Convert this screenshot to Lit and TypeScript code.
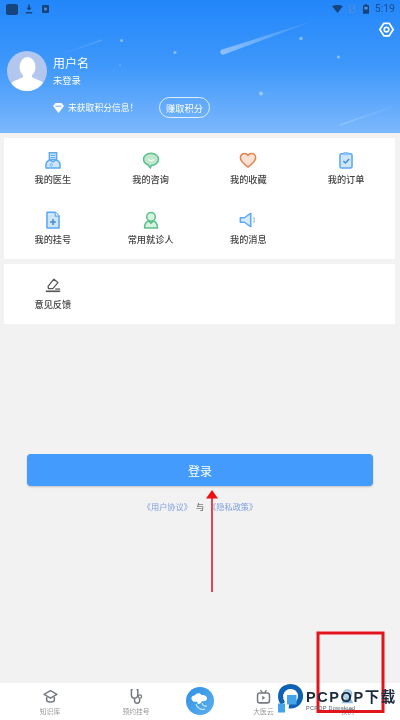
import { LitElement, html, css, svg } from "lit";
import { customElement } from "lit/decorators.js";

const BLUE = "#5aa9f2";
const GREY = "#767b82";
const menuIcons: Record<string, unknown> = {
  doctor: svg`<path d="M6 2h8v7.500H6z" fill="#dcecfb" stroke="${BLUE}" stroke-width="1.700"/><path d="M7.500 4.800h5M7.500 7.200h5" stroke="${BLUE}" stroke-width="1.300"/><path d="M2.200 19v-3.500c0-3 2.600-5 4.800-5.500l3 2 3-2c2.200.5 4.800 2.500 4.800 5.500V19z" fill="#cfe5fa" stroke="${BLUE}" stroke-width="1.700" stroke-linejoin="round"/><circle cx="8" cy="15.500" r="1.300" fill="#fff" stroke="${BLUE}"/>`,
  chat: svg`<path d="M10 2.500c4.700 0 8.300 2.900 8.300 6.700s-3.600 6.800-8.300 6.800l-.5 2.800-3-3.600C3.500 14.100 1.700 12 1.700 9.200 1.700 5.400 5.300 2.500 10 2.500z" fill="#bfe8cf" stroke="#5cc08a" stroke-width="1.700" stroke-linejoin="round"/><path d="M7 9.500c1.800 1.500 4.200 1.500 6 0" fill="none" stroke="#fff" stroke-width="1.500"/>`,
  heart: svg`<path d="M10 17.800C5 14.200 1.500 11 1.500 7.500 1.500 4.500 3.800 2.800 6.200 2.800 7.800 2.800 9.200 3.600 10 4.900 10.800 3.600 12.200 2.800 13.800 2.800 16.200 2.800 18.500 4.500 18.500 7.500c0 3.500-3.500 6.700-8.500 10.300z" fill="#fbe0d4" stroke="#e2844f" stroke-width="1.700" stroke-linejoin="round"/>`,
  order: svg`<rect x="3.300" y="3" width="13.400" height="16" rx="1.800" fill="#cfe5fa" stroke="${BLUE}" stroke-width="1.700"/><rect x="7" y="1" width="6" height="3.800" rx="1" fill="#8cc4f6"/><path d="M7 11l2.400 2.400L13.500 8.800" fill="none" stroke="#3f8fd8" stroke-width="1.600"/>`,
  reg: svg`<path d="M3.300 1.500h9.200l4.200 4.200V19H3.300z" fill="#cfe5fa" stroke="${BLUE}" stroke-width="1.700" stroke-linejoin="round"/><path d="M12.500 1.500v4.200h4.200" fill="#fff" stroke="${BLUE}" stroke-width="1.200"/><path d="M10 9v6.500M6.800 12.200h6.400" stroke="#3f8fd8" stroke-width="1.700"/>`,
  patient: svg`<circle cx="10" cy="6.500" r="4.800" fill="#d8f2e2" stroke="#5cc08a" stroke-width="1.700"/><path d="M7.500 11.200C4.500 12 2.800 14 2.800 18.800h14.400c0-4.800-1.700-6.800-4.700-7.600L10 13.500z" fill="#d8f2e2" stroke="#5cc08a" stroke-width="1.700" stroke-linejoin="round"/>`,
  msg: svg`<path d="M1.500 7.500H6l7-5v15l-7-5H1.500z" fill="#d8ebfb" stroke="${BLUE}" stroke-width="1.700" stroke-linejoin="round"/><path d="M16 6.500c1.200 2 1.200 5 0 7" fill="none" stroke="#a9d3f8" stroke-width="1.600"/>`,
  pen: svg`<path d="M4.500 11.500L11 3.500l4.500 3.800-5.700 6.700H5z" fill="none" stroke="#555" stroke-width="1.400" stroke-linejoin="round"/><path d="M2 17h16" stroke="#555" stroke-width="1.800"/><path d="M12.500 14.500h5.500" stroke="#555" stroke-width="1.400"/>`,
};

const tabIcons: Record<string, unknown> = {
  cap: svg`<path d="M10 3L2.500 7.500 10 12l7.500-4.500z" fill="none" stroke="${GREY}" stroke-width="1.800" stroke-linejoin="round"/><path d="M5.500 10.500v4.500c1.500 2 7.500 2 9 0v-4.500" fill="none" stroke="${GREY}" stroke-width="1.800"/>`,
  steth: svg`<path d="M5.500 2H4v5.500c0 3 2 4.500 3.700 4.500s3.800-1.500 3.800-4.500V2H10" fill="none" stroke="${GREY}" stroke-width="1.800"/><path d="M7.700 12v2.800c0 2 1.400 3.200 3 3.200s3-1.200 3-3.200V12" fill="none" stroke="${GREY}" stroke-width="1.800"/><circle cx="14" cy="10" r="2" fill="none" stroke="${GREY}" stroke-width="1.500"/>`,
  tv: svg`<rect x="3" y="6" width="14" height="11.500" rx="2.500" fill="none" stroke="${GREY}" stroke-width="1.800"/><path d="M6.500 2.500L9 6M13.500 2.500L11 6" stroke="${GREY}" stroke-width="1.600"/><path d="M8.500 9.200l3.500 2.400-3.500 2.400z" fill="${GREY}"/>`,
  me: svg`<circle cx="10" cy="7" r="5" fill="#b9d7ee" stroke="#8dbbdd" stroke-width="1.300"/><path d="M3.500 18c.5-4 3-5.800 6.500-5.800s6 1.800 6.500 5.800z" fill="#8dbbdd"/>`,
};

const menu = [
  ["doctor", "我的医生"],
  ["chat", "我的咨询"],
  ["heart", "我的收藏"],
  ["order", "我的订单"],
  ["reg", "我的挂号"],
  ["patient", "常用就诊人"],
  ["msg", "我的消息"],
];

const tabs = [
  ["cap", "知识库"],
  ["steth", "预约挂号"],
  ["", ""],
  ["tv", "大医云"],
  ["me", "我的"],
];

@customElement("app-root")
export class AppRoot extends LitElement {
  static styles = css`
    :host {
      display: block;
      width: 400px;
      height: 720px;
      overflow: hidden;
      position: relative;
      background: #f2f2f2;
      font-family: "Noto Sans CJK SC", "Liberation Sans", sans-serif;
      filter: blur(0.55px);
    }
    .page { display: flex; flex-direction: column; height: 720px; }
    .hero {
      position: relative;
      height: 133px;
      flex: none;
      box-sizing: border-box;
      background: linear-gradient(180deg, #2286fa 0%, #3f98fb 50%, #7cb8fc 100%);
      color: #fff;
      overflow: hidden;
    }
    .sky { position: absolute; inset: 0; width: 400px; height: 133px; }
    .status {
      position: relative;
      height: 18px;
      display: flex;
      align-items: center;
      padding: 0 5px 0 6px;
      box-sizing: border-box;
    }
    .status svg { display: block; }
    .status .gap { flex: 1; }
    .time { font-family: "Roboto", sans-serif; font-size: 10.500px; color: #1a4f90; margin-left: 6px; line-height: 18px; }
    .gear-row { position: relative; display: flex; justify-content: flex-end; padding: 4px 6px 0 0; height: 19px; box-sizing: border-box; }
    .gear-row svg { width: 15px; height: 15px; display: block; }
    .profile { position: relative; display: flex; align-items: center; gap: 6px; padding: 14px 0 0 7px; }
    .avatar { width: 40px; height: 40px; display: block; flex: none; }
    .name { font-size: 12px; line-height: 16px; }
    .sub { font-size: 9.300px; line-height: 13px; margin-top: 3px; }
    .points { position: relative; display: flex; align-items: center; padding: 6px 0 0 53px; font-size: 8.800px; }
    .points svg { width: 11px; height: 10px; margin-right: 4px; flex: none; display: block; }
    .pill {
      margin-left: 20.600px;
      width: 51px;
      height: 21px;
      box-sizing: border-box;
      border: 1.500px solid rgba(255,255,255,.8);
      border-radius: 11px;
      display: flex;
      align-items: center;
      justify-content: center;
      font-size: 9.200px;
    }
    .card { background: #fff; margin: 5px 5px 0 4px; }
    .grid { display: grid; grid-template-columns: repeat(4, 1fr); height: 121px; grid-auto-rows: 60px; }
    .cell { display: flex; flex-direction: column; align-items: center; padding-top: 13px; box-sizing: border-box; height: 60px; }
    .feedback { padding-top: 12px; }
    .cell svg { width: 18px; height: 18px; display: block; }
    .cell span { font-size: 9.200px; font-weight: 500; line-height: 12px; margin-top: 4px; color: #444; white-space: nowrap; }
    .grid-2 { height: 60px; }
    .login {
      margin: 130px 27px 0;
      height: 32px;
      background: #439cfd;
      border-radius: 4px;
      box-shadow: 0 1px 2px rgba(0,0,0,.2);
      color: #fff;
      font-size: 12px;
      display: flex;
      align-items: center;
      justify-content: center;
    }
    .links { margin-top: 14px; display: flex; justify-content: center; font-size: 8.200px; line-height: 12px; color: #7f9fe0; gap: 4px; }
    .links b { font-weight: 400; color: #444; }
    .spacer { flex: 1; }
    .tabbar {
      flex: none;
      height: 37px;
      background: #fff;
      display: grid;
      grid-template-columns: 100px 72px 56px 71px 97px;
    }
    .tab { display: flex; flex-direction: column; align-items: center; padding-top: 5px; box-sizing: border-box; }
    .tab svg { width: 17px; height: 17px; display: block; }
    .tab span { font-size: 6.800px; line-height: 10px; color: #999; margin-top: 1px; white-space: nowrap; }
    .hub { display: flex; justify-content: center; padding-top: 4px; }
    .hub svg { width: 28px; height: 28px; display: block; }
    .overlay { position: absolute; left: 0; top: 0; width: 400px; height: 720px; pointer-events: none; }
    .mark { position: absolute; left: 306px; top: 690px; color: #1c2b3d; font-weight: 700; font-size: 14.500px; line-height: 15px; letter-spacing: 1.600px; font-family: "Liberation Sans", "Noto Sans CJK SC", sans-serif; white-space: nowrap; }
    .mark-sub { position: absolute; left: 306px; top: 705px; color: #555f6b; font-size: 5.500px; line-height: 7px; font-family: "Liberation Sans", sans-serif; white-space: nowrap; letter-spacing: 0.300px; }
  `;

  private gear() {
    return html`<svg viewBox="1 1 18 18"><path d="M6.800 2.500h6.400l4.800 7.500-4.800 7.500H6.800L2 10z" fill="none" stroke="#fff" stroke-width="2.100" stroke-linejoin="round"/><circle cx="10" cy="10" r="2.800" fill="none" stroke="#fff" stroke-width="1.900"/></svg>`;
  }

  render() {
    return html`
      <div class="page">
        <section class="hero">
          <svg class="sky" viewBox="0 0 400 133">
            <defs>
              <linearGradient id="m1" x1="222" y1="52" x2="322" y2="18" gradientUnits="userSpaceOnUse">
                <stop offset="0" stop-color="#fff" stop-opacity=".42"/><stop offset="1" stop-color="#fff" stop-opacity="0"/>
              </linearGradient>
              <linearGradient id="m2" x1="62" y1="54" x2="102" y2="40" gradientUnits="userSpaceOnUse">
                <stop offset="0" stop-color="#fff" stop-opacity="0"/><stop offset="1" stop-color="#fff" stop-opacity=".16"/>
              </linearGradient>
              <linearGradient id="m3" x1="340" y1="125" x2="392" y2="107" gradientUnits="userSpaceOnUse">
                <stop offset="0" stop-color="#fff" stop-opacity=".2"/><stop offset="1" stop-color="#fff" stop-opacity=".04"/>
              </linearGradient>
            </defs>
            <path d="M222 49.500L322 18 224 54.500a2.600 2.600 0 0 1-2-5z" fill="url(#m1)"/>
            <path d="M62 54L102 40" stroke="url(#m2)" stroke-width="1.500"/>
            <path d="M340 125L392 107" stroke="url(#m3)" stroke-width="1.500"/>
            <g fill="#fff" fill-opacity=".42">
              <circle cx="121.500" cy="40.500" r="1.500"/><circle cx="175" cy="52.500" r="1.500"/>
              <circle cx="301" cy="38.500" r="1.700"/><circle cx="338.500" cy="57" r="1.500"/>
              <circle cx="261" cy="93.500" r="2"/><circle cx="120" cy="65" r="1" fill-opacity=".2"/>
            </g>
          </svg>
          <div class="status">
            <svg width="12" height="11" viewBox="0 0 12 11"><rect width="12" height="11" rx="2" fill="#16447c"/></svg>
            <svg width="8" height="10" viewBox="0 0 10 11" style="margin-left:7px"><path d="M4 0h2v4h2.500L5 7.500 1.500 4H4zM1 9.300h8V11H1z" fill="#16447c"/></svg>
            <svg width="7" height="8" viewBox="0 0 8 9" style="margin-left:9px"><rect width="8" height="9" rx="1" fill="#16447c"/><rect x="2.500" y="3" width="3" height="3" fill="#5a8fd0"/></svg>
            <span class="gap"></span>
            <svg width="11" height="8" viewBox="0 0 12 9"><path d="M0 1.500C3.500-.5 8.500-.5 12 1.500L6 9z" fill="#16447c"/></svg>
            <svg width="6" height="8" viewBox="0 0 7 9" style="margin-left:6px"><rect x=".5" y=".5" width="6" height="8" rx="1" fill="none" stroke="#5f8fc8"/><path d="M1.500 6.500l4-4" stroke="#5f8fc8"/></svg>
            <svg width="6" height="10" viewBox="0 0 7 11" style="margin-left:8px"><path d="M2 0h3v1h1.500a.5.500 0 0 1 .5.500V11H0V1.500A.5.500 0 0 1 .5 1H2z" fill="#16447c"/><rect x="1.500" y="3" width="4" height="3" fill="#5a8fd0"/></svg>
            <span class="time">5:19</span>
          </div>
          <div class="gear-row">${this.gear()}</div>
          <div class="profile">
            <svg class="avatar" viewBox="0 0 40 40">
              <clipPath id="av"><circle cx="20" cy="20" r="20"/></clipPath>
              <circle cx="20" cy="20" r="20" fill="#b3c6ee"/>
              <g clip-path="url(#av)" fill="#fff">
                <ellipse cx="20.500" cy="16" rx="8" ry="10"/>
                <path d="M16 22h9v4c3 2.500 10 3 12 7v7H4v-7c2-4 9-4.500 12-7z"/>
              </g>
            </svg>
            <div>
              <div class="name">用户名</div>
              <div class="sub">未登录</div>
            </div>
          </div>
          <div class="points">
            <svg viewBox="0 0 11 10"><path d="M2.500 0h6L11 3 5.500 10 0 3z" fill="#fff"/><path d="M2.500 3.200h6" stroke="#6aaefb" stroke-width="1"/></svg>
            <span>未获取积分信息！</span>
            <div class="pill">赚取积分</div>
          </div>
        </section>

        <section class="card grid">
          ${menu.map(
            ([k, t]) => html`<div class="cell"><svg viewBox="0 0 20 20">${menuIcons[k]}</svg><span>${t}</span></div>`
          )}
        </section>
        <section class="card grid grid-2">
          <div class="cell feedback"><svg viewBox="0 0 20 20">${menuIcons.pen}</svg><span>意见反馈</span></div>
        </section>

        <div class="login">登录</div>
        <div class="links"><span>《用户协议》</span><b>与</b><span>《隐私政策》</span></div>
        <div class="spacer"></div>

        <nav class="tabbar">
          ${tabs.map(([k, t]) =>
            k
              ? html`<div class="tab"><svg viewBox="0 0 20 20">${tabIcons[k]}</svg><span>${t}</span></div>`
              : html`<div class="hub">
                  <svg viewBox="0 0 28 28">
                    <defs><linearGradient id="hub" x1="0" y1="0" x2="1" y2="1"><stop offset="0" stop-color="#2f8fe6"/><stop offset="1" stop-color="#5cb0ee"/></linearGradient></defs>
                    <circle cx="14" cy="14" r="14" fill="url(#hub)"/>
                    <path d="M6 13c-1.500-2.500.5-5 3-4.500C10 6 14 5.500 15.500 8c3-.5 6 1.500 5.500 4-.5 2-3 2.500-5 2-1 2-2 3-3.500 3-1 0-1-1.500-1.500-2.500C9 15 7 15 6 13z" fill="#fff"/>
                    <path d="M10 17c1 4 5 6.500 9 5M16 16c.5 2.500 2.500 3.500 5 3" fill="none" stroke="#cfe6fa" stroke-width="1.100"/>
                  </svg>
                </div>`
          )}
        </nav>
      </div>

      <svg class="overlay" viewBox="0 0 400 720">
        <path d="M212 497V592" stroke="#e0343a" stroke-width="1.800"/>
        <path d="M212 490l6 8.500h-12z" fill="#ee0f12"/>
        <rect x="318" y="633" width="65" height="78.500" fill="none" stroke="#e3141c" stroke-width="3"/>
        <path d="M283 703.500c-4-5.500-3-12.500 2-15.500 5.500-3 12-1 14.500 3.500 2.500 5 .5 11-4.500 13.500-2 1-4 1.200-6 .8" fill="none" stroke="#0d62b4" stroke-width="5"/>
        <rect x="287" y="695" width="9.500" height="9.500" fill="#43a4ea"/>
        <rect x="278" y="703.500" width="7" height="9" fill="#43a4ea"/>
      </svg>
      <div class="mark">PCPOP下载</div>
      <div class="mark-sub">PCPOP Download</div>
    `;
  }
}
